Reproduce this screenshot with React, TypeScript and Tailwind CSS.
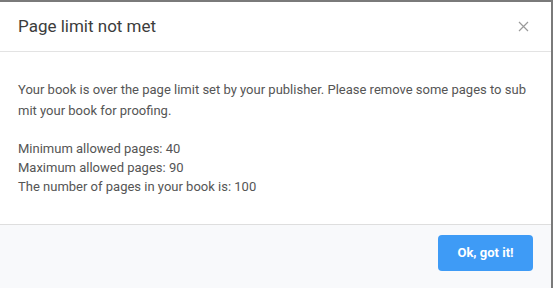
const App = () => {
  return (
    <div className="w-[553px] h-[288px] bg-[#7a7a7a] pt-[2px] pr-[2px] overflow-hidden" style={{ fontFamily: 'Roboto, "Liberation Sans", sans-serif' }}>
      <div className="w-[551px] h-[286px] bg-white flex flex-col">
        <div className="h-[50px] flex items-center justify-between pl-[18px] pr-[22px] border-b border-[#e3e3e3]">
          <h2 className="text-[17px] text-[#3c3c3c] leading-none">Page limit not met</h2>
          <button className="text-[#9a9a9a]">
            <svg width="11" height="11" viewBox="0 0 11 11" fill="none" stroke="currentColor" strokeWidth="1.2">
              <path d="M1 1l9 9M10 1l-9 9" />
            </svg>
          </button>
        </div>
        <div className="h-[172px] px-[18px] pt-[27px] text-[13px] leading-[21px] text-[#555] break-all">
          <p>
            Your book is over the page limit set by your publisher. Please remove some pages to submit your book for proofing.
          </p>
          <div className="mt-[18px] leading-[19px]">
            <p>Minimum allowed pages: 40</p>
            <p>Maximum allowed pages: 90</p>
            <p>The number of pages in your book is: 100</p>
          </div>
        </div>
        <div className="flex-1 bg-[#f8f9fb] border-t border-[#dedede] flex justify-end items-start pt-[10px] pr-[18px]">
          <button className="h-[36px] w-[95px] rounded-[4px] bg-[#3e9bf6] text-white font-bold text-[13px]">
            Ok, got it!
          </button>
        </div>
      </div>
    </div>
  );
};

export default App;
